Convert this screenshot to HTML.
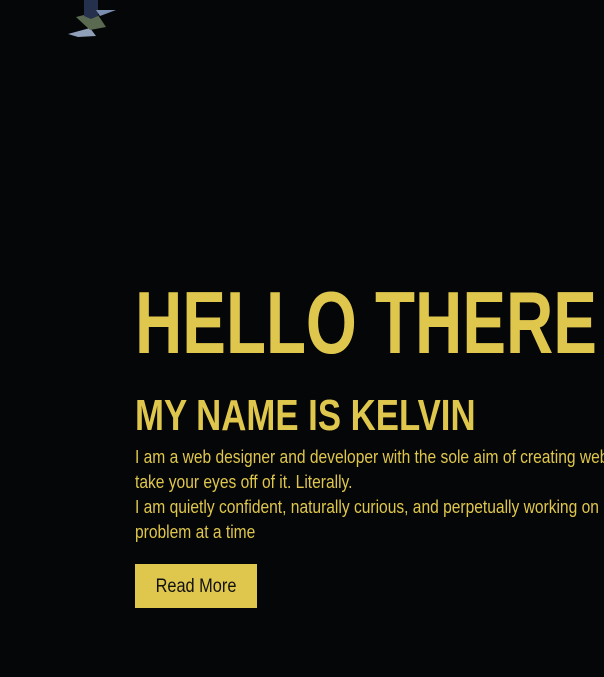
<!DOCTYPE html>
<html><head><style>
html,body{margin:0;padding:0;width:604px;height:677px;overflow:hidden;background:#050607;}
body{position:relative;font-family:"Liberation Sans Narrow","Liberation Sans",sans-serif;color:#dfc64c;}
.t{position:absolute;white-space:nowrap;transform-origin:0 0;}
#h1{left:135px;top:275px;font-size:88px;font-weight:bold;line-height:96px;transform:scaleX(0.744);}
#h2{left:135px;top:391px;font-size:44px;font-weight:bold;line-height:50px;transform:scaleX(0.79);}
#p{left:135px;top:445px;font-size:18px;line-height:25px;transform:scaleX(0.865);}
#btn{position:absolute;left:135px;top:564px;width:122px;height:44px;background:#dfc64c;color:#111;font-size:19px;line-height:46px;text-align:center;}
#btn span{display:inline-block;transform:scaleX(0.86);}
#wrap{position:absolute;left:0;top:0;width:604px;height:677px;overflow:hidden;}
</style></head><body><div id="wrap">
<svg style="position:absolute;left:66px;top:0" width="52" height="38" viewBox="0 0 52 38">
<polygon points="2,34 24,28 30,36 12,37" fill="#8fa0b8"/>
<polygon points="10,17 30,12 40,27 24,30" fill="#5a6a50"/>
<path d="M18,0 h14 v16 l-7,3 l-7,-3z" fill="#24304c"/>
<polygon points="30,10 50,10 34,16" fill="#7a8eb0"/>
</svg>
<div class="t" id="h1">HELLO THERE</div>
<div class="t" id="h2">MY NAME IS KELVIN</div>
<div class="t" id="p">I am a web designer and developer with the sole aim of creating websites you can't<br>take your eyes off of it. Literally.<br>I am quietly confident, naturally curious, and perpetually working on improving, one<br>problem at a time</div>
<div id="btn"><span>Read More</span></div>
</div></body></html>
